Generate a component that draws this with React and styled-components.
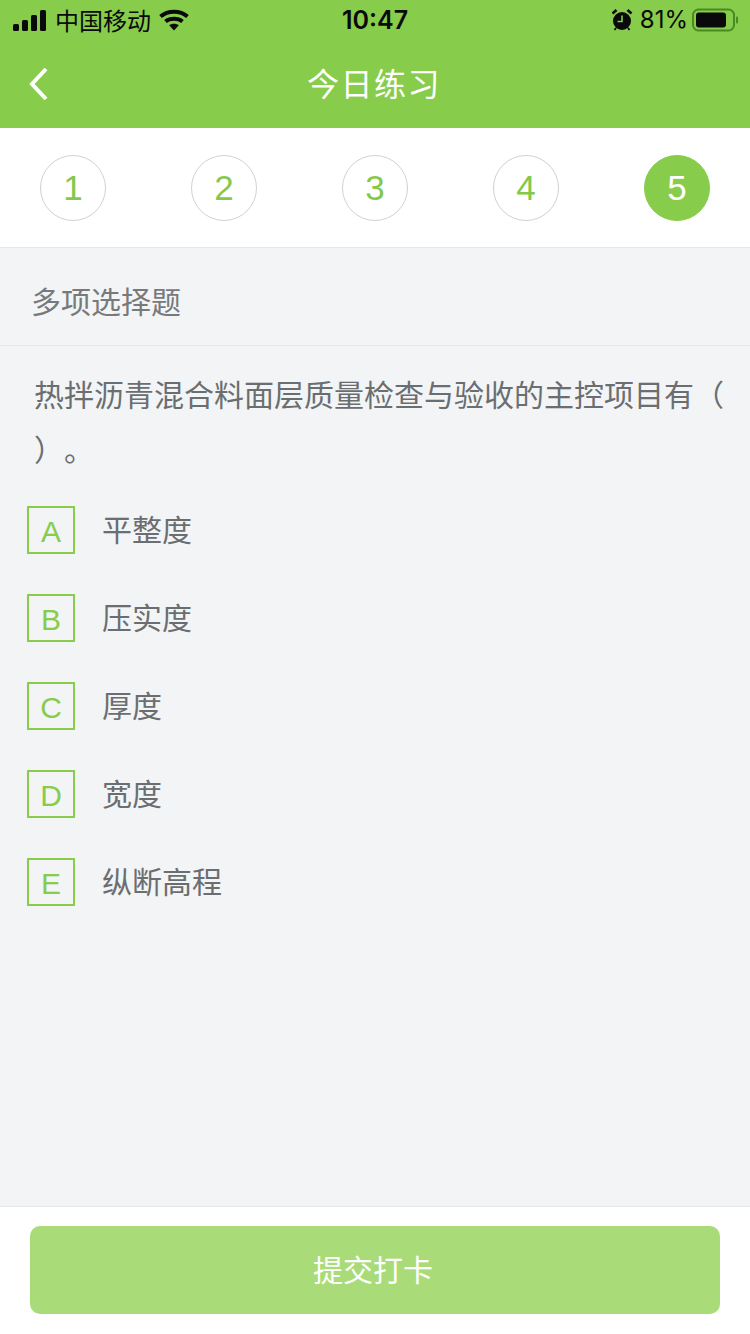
import React from "react";
import styled, { createGlobalStyle } from "styled-components";

const Global = createGlobalStyle`
  html, body { margin: 0; padding: 0; }
  body { font-family: "Inter", "Noto Sans CJK SC", sans-serif; background: #f2f4f6; }
`;
const CJK = `"Noto Sans CJK SC", sans-serif`;
const Latin = `"Liberation Sans", sans-serif`;
const Page = styled.div`
  width: 750px; height: 1334px; display: flex; flex-direction: column; overflow: hidden; background: #f2f4f6;
`;
const Header = styled.header`
  height: 128px; flex: none; background: #87cc4b; display: flex; flex-direction: column;
`;
const StatusBar = styled.div`
  height: 40px; position: relative; display: flex; align-items: center; justify-content: space-between;
  padding: 0 12px 0 13px; color: #0a0a0a;
`;
const StatusSide = styled.div`
  display: flex; align-items: center; gap: ${p => p.$gap}px;
`;
const Carrier = styled.span`
  font: 400 24px/40px ${CJK};
`;
const Clock = styled.span`
  position: absolute; left: 0; right: 0; text-align: center; font: 600 25px/40px "Inter", sans-serif;
`;
const Percent = styled.span`
  font: 400 24px/40px "Inter", sans-serif; margin-right: -2px;
`;
const NavBar = styled.div`
  height: 88px; position: relative; display: flex; align-items: center; justify-content: center;
`;
const Back = styled.svg`
  position: absolute; left: 29px; top: 27px;
`;
const Title = styled.h1`
  margin: 0; font: 400 32px/1 ${CJK}; color: #fff; letter-spacing: 1.5px; position: relative; top: -2px; right: 1px;
`;
const Steps = styled.nav`
  flex: none; background: #fff; border-bottom: 1px solid #e6e8ea; box-sizing: border-box; height: 120px;
  display: flex; align-items: center; justify-content: space-between; padding: 0 40px;
`;
const Step = styled.div`
  width: 66px; height: 66px; border-radius: 50%; box-sizing: border-box;
  display: flex; align-items: center; justify-content: center;
  font: 400 35px/1 ${Latin};
  color: ${p => (p.$active ? "#fff" : "#84c94c")};
  background: ${p => (p.$active ? "#87cc4b" : "#fff")};
  border: 1px solid ${p => (p.$active ? "#87cc4b" : "#cfd1d3")};
`;
const Kind = styled.div`
  height: 98px; flex: none; box-sizing: border-box; border-bottom: 1px solid #e6e8ea;
  padding: 7px 31px 0; display: flex; align-items: center;
  font: 400 30px/1 ${CJK}; color: #77797b;
`;
const Question = styled.p`
  margin: 0; padding: 20px 20px 0 34px;
  font: 400 30px/55px ${CJK}; color: #6b6e70; word-break: break-all; text-spacing-trim: space-all;
`;
const Options = styled.ul`
  list-style: none; margin: 0; padding: 30px 0 0 27px; display: flex; flex-direction: column; gap: 40px;
`;
const Option = styled.li`
  display: flex; align-items: center; height: 48px; gap: 27px;
`;
const Letter = styled.span`
  width: 48px; height: 48px; box-sizing: border-box; border: 2px solid #87cc4b;
  display: flex; align-items: center; justify-content: center;
  font: 400 30px/1 ${Latin}; color: #87cc4b;
  padding-top: 3px;
`;
const OptionText = styled.span`
  font: 400 30px/1 ${CJK}; color: #6b6e70; position: relative; top: -2px;
`;
const Footer = styled.footer`
  margin-top: auto; height: 128px; flex: none; box-sizing: border-box; background: #fff;
  border-top: 1px solid #e6e8ea; padding: 19px 30px 0;
`;
const Submit = styled.button`
  width: 690px; height: 88px; border: 0; border-radius: 10px; background: #a9dc79; color: #fff;
  font: 400 30px/1 ${CJK}; padding: 0 4px 4px 0; display: block;
`;

const Signal = () => (
  <svg width="34" height="21" viewBox="0 0 34 21" fill="#0a0a0a">
    <rect x="0" y="14" width="6" height="7" rx="1.500" />
    <rect x="9" y="10" width="6" height="11" rx="1.500" />
    <rect x="18" y="5" width="6" height="16" rx="1.500" />
    <rect x="27" y="0" width="6" height="21" rx="1.500" />
  </svg>
);
const Wifi = () => (
  <svg width="30" height="22" viewBox="0 0 30 22" fill="none" stroke="#0a0a0a" strokeWidth="4">
    <path d="M1.500 7.500C9 1 21 1 28.500 7.500" />
    <path d="M6.500 12.500C11 8.800 19 8.800 23.500 12.500" />
    <path d="M15 21.500l-4.800-5.200c2.600-2 7-2 9.600 0z" fill="#0a0a0a" stroke="none" />
  </svg>
);
const Alarm = () => (
  <svg width="22" height="22" viewBox="0 0 22 22">
    <circle cx="10" cy="12" r="9" fill="#0a0a0a" />
    <path d="M10 6.500v6H5.500" stroke="#87cc4b" strokeWidth="1.600" fill="none" />
    <path d="M0.500 4.500L4.500 1M19.500 4.500L15.500 1" stroke="#0a0a0a" strokeWidth="2.600" />
    <path d="M4 19l-1.500 2M16 19l1.500 2" stroke="#0a0a0a" strokeWidth="1.800" />
  </svg>
);
const Battery = () => (
  <svg width="46" height="24" viewBox="0 0 46 24">
    <rect x="1" y="1.500" width="41" height="21" rx="5.500" fill="none" stroke="#4a8a22" strokeWidth="2" />
    <rect x="4" y="4.500" width="30" height="15" rx="3" fill="#0a0a0a" />
    <rect x="44" y="8.500" width="2" height="7" rx="1" fill="#4a8a22" />
  </svg>
);

const options = [
  ["A", "平整度"],
  ["B", "压实度"],
  ["C", "厚度"],
  ["D", "宽度"],
  ["E", "纵断高程"],
];

export default function App() {
  return (
    <Page>
      <Global />
      <Header>
        <StatusBar>
          <StatusSide $gap={8}>
            <Signal />
            <Carrier>中国移动</Carrier>
            <Wifi />
          </StatusSide>
          <Clock>10:47</Clock>
          <StatusSide $gap={6}>
            <Alarm />
            <Percent>81%</Percent>
            <Battery />
          </StatusSide>
        </StatusBar>
        <NavBar>
          <Back width="20" height="34" viewBox="0 0 20 34" fill="none" stroke="#fff" strokeWidth="4">
            <path d="M17 2L3 17l14 15" />
          </Back>
          <Title>今日练习</Title>
        </NavBar>
      </Header>
      <Steps>
        {[1, 2, 3, 4, 5].map(n => (
          <Step key={n} $active={n === 5}>{n}</Step>
        ))}
      </Steps>
      <Kind>多项选择题</Kind>
      <Question>热拌沥青混合料面层质量检查与验收的主控项目有（ ）。</Question>
      <Options>
        {options.map(([l, t]) => (
          <Option key={l}>
            <Letter>{l}</Letter>
            <OptionText>{t}</OptionText>
          </Option>
        ))}
      </Options>
      <Footer>
        <Submit>提交打卡</Submit>
      </Footer>
    </Page>
  );
}
